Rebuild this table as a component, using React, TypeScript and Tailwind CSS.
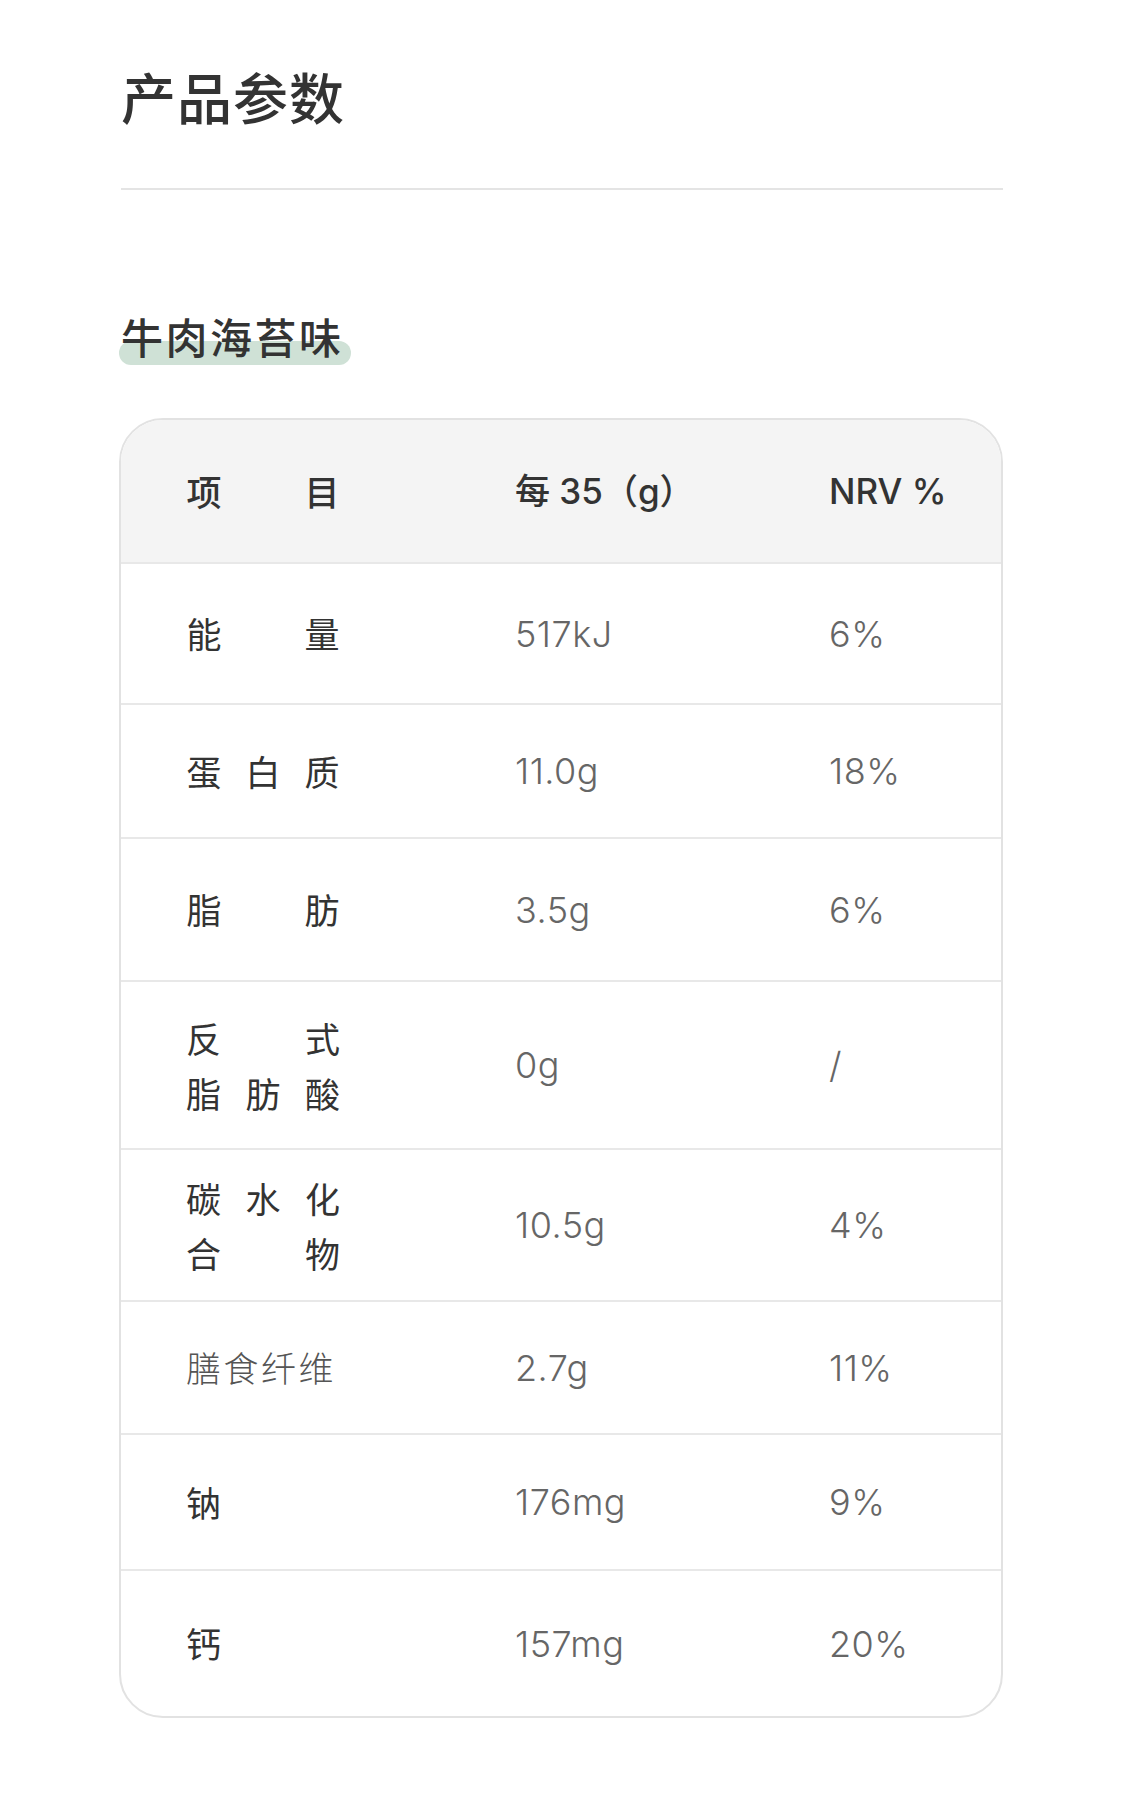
import React from "react";

type Row = {
  label: React.ReactNode;
  value: string;
  nrv: string;
  h: string;
};

const cjk = { fontFamily: '"Noto Sans CJK SC", sans-serif' };
const num = { fontFamily: 'Inter, "Noto Sans CJK SC", sans-serif' };

function Spread({ chars }: { chars: string[] }) {
  return (
    <div className="flex w-[154px] justify-between">
      {chars.map((c, i) => (
        <span key={i} className="w-[36px] text-center">
          {c}
        </span>
      ))}
    </div>
  );
}

function TwoLine({ top, bottom }: { top: string[]; bottom: string[] }) {
  return (
    <div className="grid w-[154px] grid-cols-3 justify-between leading-[55px]">
      {[...top, ...bottom].map((c, i) => (
        <span
          key={i}
          className={
            i % 3 === 0 ? "text-left" : i % 3 === 1 ? "text-center" : "text-right"
          }
        >
          {c}
        </span>
      ))}
    </div>
  );
}

const rows: Row[] = [
  { label: <Spread chars={["能", "量"]} />, value: "517kJ", nrv: "6%", h: "h-[141px]" },
  { label: <Spread chars={["蛋", "白", "质"]} />, value: "11.0g", nrv: "18%", h: "h-[134px]" },
  { label: <Spread chars={["脂", "肪"]} />, value: "3.5g", nrv: "6%", h: "h-[143px]" },
  {
    label: <TwoLine top={["反", "", "式"]} bottom={["脂", "肪", "酸"]} />,
    value: "0g",
    nrv: "/",
    h: "h-[168px]",
  },
  {
    label: <TwoLine top={["碳", "水", "化"]} bottom={["合", "", "物"]} />,
    value: "10.5g",
    nrv: "4%",
    h: "h-[152px]",
  },
  {
    label: <span className="font-light text-[#555] tracking-[2.5px]">膳食纤维</span>,
    value: "2.7g",
    nrv: "11%",
    h: "h-[133px]",
  },
  { label: <span>钠</span>, value: "176mg", nrv: "9%", h: "h-[136px]" },
  { label: <span>钙</span>, value: "157mg", nrv: "20%", h: "h-[147px]" },
];

export default function App() {
  return (
    <div className="min-h-[1811px] w-[1125px] bg-white pl-[119px] pr-[122px] pt-[68px]" style={cjk}>
      <h1 className="pl-[2px] text-[55px] font-medium leading-none tracking-[1px] text-[#333]">
        产品参数
      </h1>
      <div className="ml-[2px] mt-[65px] h-[2px] bg-[#e4e4e4]" />

      <div className="mt-[125px] inline-block relative">
        <span className="absolute left-0 top-[26px] h-[24px] w-[232px] rounded-full bg-[#cfe1d6]" />
        <h2 className="relative pl-[2px] text-[42px] font-medium leading-none tracking-[2.5px] text-[#333]">
          牛肉海苔味
        </h2>
      </div>

      <div className="mt-[59px] overflow-hidden rounded-[44px] border-2 border-[#e2e2e2]">
        <div className="grid h-[142px] grid-cols-[329px_314px_1fr] items-center bg-[#f4f4f4] pl-[65px] text-[35px] font-medium text-[#333]">
          <Spread chars={["项", "目"]} />
          <div style={num}>每 35（g）</div>
          <div style={num}>NRV %</div>
        </div>
        {rows.map((r, i) => (
          <div
            key={i}
            className={`grid ${r.h} grid-cols-[329px_314px_1fr] items-center border-t-2 border-[#e8e8e8] pl-[65px]`}
          >
            <div className="text-[35px] text-[#333]">{r.label}</div>
            <div className="text-[36px] font-light tracking-[0.5px] text-[#666]" style={num}>
              {r.value}
            </div>
            <div className="text-[36px] font-light tracking-[0.5px] text-[#666]" style={num}>
              {r.nrv}
            </div>
          </div>
        ))}
      </div>
    </div>
  );
}
